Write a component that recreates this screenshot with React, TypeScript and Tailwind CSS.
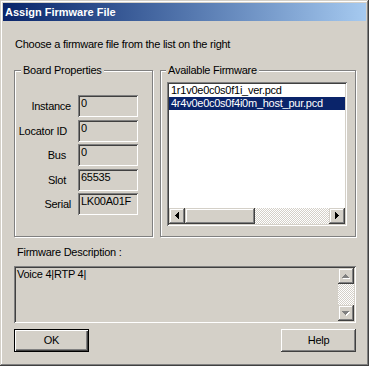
import React from 'react';

type Dir = 'up' | 'down' | 'left' | 'right';

// 7x4 pixel triangle, drawn with 1px rects so it stays crisp
function arrowRects(dir: Dir) {
  const out: { x: number; y: number; w: number; h: number }[] = [];
  for (let i = 0; i < 4; i++) {
    const len = 7 - 2 * i;
    if (dir === 'up') out.push({ x: i, y: 3 - i, w: len, h: 1 });
    if (dir === 'down') out.push({ x: i, y: i, w: len, h: 1 });
    if (dir === 'left') out.push({ x: 3 - i, y: i, w: 1, h: len });
    if (dir === 'right') out.push({ x: i, y: i, w: 1, h: len });
  }
  return out;
}

function Arrow({ dir, disabled = false }: { dir: Dir; disabled?: boolean }) {
  const horiz = dir === 'left' || dir === 'right';
  const ox = horiz ? 6 : 4;
  const oy = horiz ? 4 : 6;
  const rects = arrowRects(dir);
  return (
    <svg width="16" height="16" viewBox="0 0 16 16" shapeRendering="crispEdges" className="block">
      {disabled &&
        rects.map((r, i) => (
          <rect key={'s' + i} x={ox + r.x + 1} y={oy + r.y + 1} width={r.w} height={r.h} fill="#ffffff" />
        ))}
      {rects.map((r, i) => (
        <rect key={i} x={ox + r.x} y={oy + r.y} width={r.w} height={r.h} fill={disabled ? '#808080' : '#000000'} />
      ))}
    </svg>
  );
}

function ScrollButton({ dir, disabled }: { dir: Dir; disabled?: boolean }) {
  return (
    <div className="w-[16px] h-[16px] shrink-0 bg-[#d4d0c8] shadow-[inset_-1px_-1px_#404040,inset_1px_1px_#d4d0c8,inset_-2px_-2px_#808080,inset_2px_2px_#fff]">
      <Arrow dir={dir} disabled={disabled} />
    </div>
  );
}

function Group({ title, titleLeft, className, children }: { title: string; titleLeft: string; className?: string; children: React.ReactNode }) {
  return (
    <div className={'relative border border-[#808080] shadow-[inset_1px_1px_#fff,1px_1px_#fff] ' + (className ?? '')}>
      <div className={'absolute top-[-7px] px-[2px] bg-[#d4d0c8] ' + titleLeft}>{title}</div>
      {children}
    </div>
  );
}

const props = [
  { label: 'Instance', value: '0', pr: 'pr-[7px]' },
  { label: 'Locator ID', value: '0', pr: 'pr-[11px]' },
  { label: 'Bus', value: '0', pr: 'pr-[12px]' },
  { label: 'Slot', value: '65535', pr: 'pr-[12px]' },
  { label: 'Serial', value: 'LK00A01F', pr: 'pr-[7px]' },
];

const firmware = ['1r1v0e0c0s0f1i_ver.pcd', '4r4v0e0c0s0f4i0m_host_pur.pcd'];

export default function App() {
  return (
    <div className="w-[369px] h-[366px] bg-[#d4d0c8] p-[3px] flex flex-col text-[11px] leading-[13px] text-black font-['Liberation_Sans',Arial,sans-serif] select-none shadow-[inset_-1px_-1px_#404040,inset_1px_1px_#d4d0c8,inset_-2px_-2px_#808080,inset_2px_2px_#fff]">
      {/* Title bar */}
      <div className="h-[18px] shrink-0 bg-linear-to-r from-[#0a246a] to-[#a6caf0] flex items-center pl-[2px] text-white font-bold">
        Assign Firmware File
      </div>

      <div className="flex flex-col pl-[11px] pr-[10px] pt-[17px] tracking-[-0.25px]">
        <div className="pl-[1px]">Choose a firmware file from the list on the right</div>

        <div className="flex gap-[7px] mt-[19px] h-[167px]">
          <Group title="Board Properties" titleLeft="left-[6px]" className="w-[139px] shrink-0">
            <div className="flex flex-col gap-[2.5px] pt-[24px]">
              {props.map((p) => (
                <div key={p.label} className="flex items-start">
                  <div className={'w-[63px] text-right pt-[5px] ' + p.pr}>{p.label}</div>
                  <div className="w-[60px] h-[22px] pl-[2px] pt-[2px] shadow-[inset_1px_1px_#808080,inset_-1px_-1px_#fff,inset_2px_2px_#404040,inset_-2px_-2px_#d4d0c8]">
                    <div className="pl-[1px]">{p.value}</div>
                  </div>
                </div>
              ))}
            </div>
          </Group>

          <Group title="Available Firmware" titleLeft="left-[5px]" className="flex-1">
            <div className="ml-[6px] mt-[11px] w-[180px] h-[144px] p-[2px] flex flex-col bg-white shadow-[inset_1px_1px_#808080,inset_-1px_-1px_#fff,inset_2px_2px_#404040,inset_-2px_-2px_#d4d0c8]">
              <div className="flex-1 flex flex-col">
                {firmware.map((f, i) => (
                  <div key={f} className={'h-[13px] pl-[2px] whitespace-nowrap ' + (i === 1 ? 'bg-[#0a246a] text-white' : '')}>
                    {f}
                  </div>
                ))}
              </div>
              <div className="h-[16px] flex">
                <ScrollButton dir="left" />
                <div className="w-[70px] h-[16px] bg-[#d4d0c8] shadow-[inset_-1px_-1px_#404040,inset_1px_1px_#d4d0c8,inset_-2px_-2px_#808080,inset_2px_2px_#fff]" />
                <div className="flex-1 bg-[repeating-conic-gradient(#fff_0_25%,#d4d0c8_0_50%)] bg-[length:2px_2px]" />
                <ScrollButton dir="right" />
              </div>
            </div>
          </Group>
        </div>

        <div className="pl-[3px] mt-[9px]">Firmware Description :</div>

        <div className="mt-[7px] h-[57px] p-[2px] flex shadow-[inset_1px_1px_#808080,inset_-1px_-1px_#fff,inset_2px_2px_#404040,inset_-2px_-2px_#d4d0c8]">
          <div className="flex-1 pl-[1px]">Voice 4|RTP 4|</div>
          <div className="w-[16px] flex flex-col">
            <ScrollButton dir="up" disabled />
            <div className="flex-1 bg-[repeating-conic-gradient(#fff_0_25%,#d4d0c8_0_50%)] bg-[length:2px_2px]" />
            <ScrollButton dir="down" disabled />
          </div>
        </div>

        <div className="mt-[6px] flex justify-between">
          <button className="w-[75px] h-[23px] border border-black bg-[#d4d0c8] shadow-[inset_1px_1px_#fff,inset_-1px_-1px_#404040,inset_-2px_-2px_#808080] flex items-center justify-center">
            OK
          </button>
          <button className="w-[75px] h-[23px] bg-[#d4d0c8] shadow-[inset_-1px_-1px_#404040,inset_1px_1px_#fff,inset_-2px_-2px_#808080,inset_2px_2px_#d4d0c8] flex items-center justify-center">
            Help
          </button>
        </div>
      </div>
    </div>
  );
}
